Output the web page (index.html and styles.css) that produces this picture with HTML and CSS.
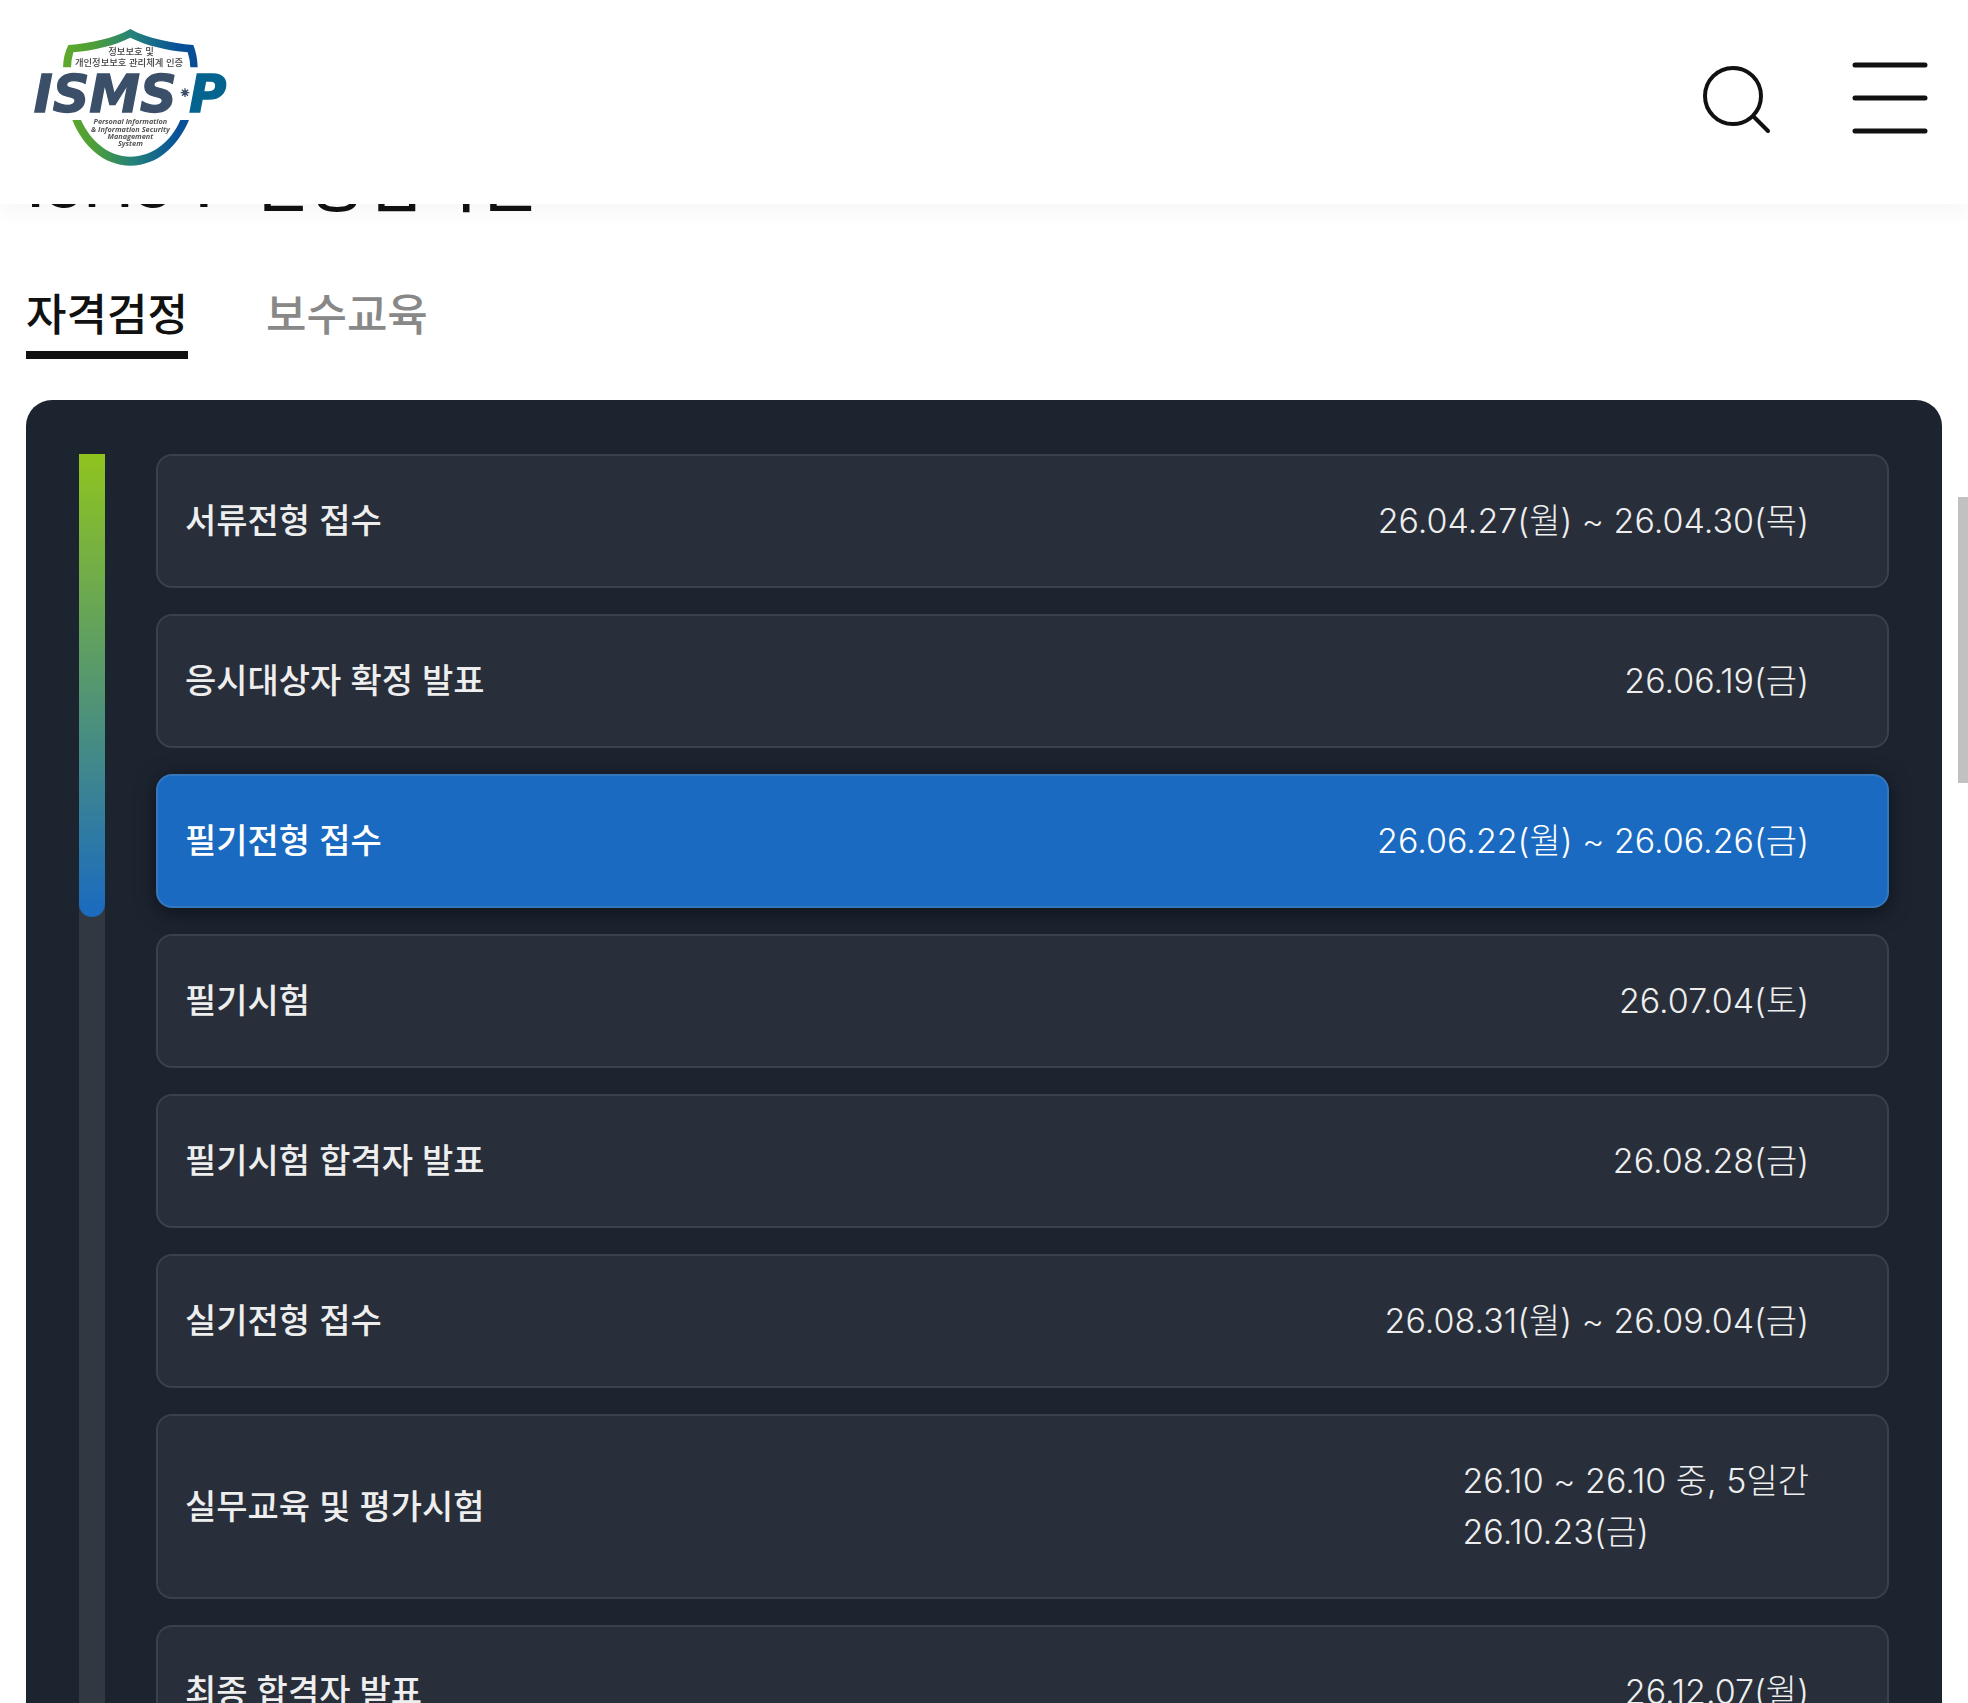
FILE: index.html
```html
<!DOCTYPE html>
<html lang="ko">
<head>
  <meta charset="UTF-8" />
  <meta name="viewport" content="width=device-width, initial-scale=1.0"/>
  <title>ISMS-P 인증심사원</title>
  <link rel="stylesheet" href="styles.css">
</head>
<body>

  <!-- Header -->
  <header class="header">
    <a href="#" class="logo" aria-label="ISMS-P">
      <svg viewBox="99 81 591 426" width="197" height="142">
        <defs>
          <linearGradient id="shield" gradientUnits="userSpaceOnUse" x1="190" y1="0" x2="593" y2="0">
            <stop offset="0" stop-color="#5fa92c"/>
            <stop offset="0.22" stop-color="#4f9f38"/>
            <stop offset="0.52" stop-color="#24817a"/>
            <stop offset="0.85" stop-color="#08529a"/>
            <stop offset="1" stop-color="#084c94"/>
          </linearGradient>
        </defs>
        <path fill="url(#shield)" d="M189 202Q190 165 205 135C275 129 340 116 391 87C442 116 515 129 580 135Q592 165 593 202H571Q570 178 563 157C500 151 440 137 391 113C342 137 282 151 220 157Q214 178 213 202Z"/>
        <path fill="url(#shield)" d="M217 360H243C272 424 326 470 391 470C458 470 514 424 541 360H567C535 436 474 497 391 497C310 497 247 436 217 360Z"/>
        <g class="logo-ko">
          <text x="393" y="166">정보보호 및</text>
          <text x="387" y="198">개인정보보호 관리체계 인증</text>
        </g>
        <g class="logo-mark">
          <text x="101" y="337" fill="#3b4f69" stroke="#3b4f69">ISMS</text>
          <text x="567" y="337" fill="#05638f" stroke="#05638f">P</text>
        </g>
        <path d="M555 265V291M542 278H568M546 269L564 287M564 269L546 287" stroke="#3b4f69" stroke-width="4"/>
        <circle cx="555" cy="278" r="7" fill="#3b4f69"/>
        <g class="logo-en">
          <text x="391" y="373">Personal information</text>
          <text x="391" y="395">&amp; Information Security</text>
          <text x="391" y="417">Management</text>
          <text x="391" y="438">System</text>
        </g>
      </svg>
    </a>
    <div class="header-menu">
      <button type="button" aria-label="검색">
        <svg viewBox="0 0 72 72" width="72" height="72" fill="none" stroke="#111" stroke-width="4" stroke-linecap="round">
          <circle cx="33" cy="34" r="28"/>
          <path d="M54 55L68 69"/>
        </svg>
      </button>
      <button type="button" aria-label="전체 메뉴">
        <svg viewBox="0 0 76 72" width="76" height="72" stroke="#111" stroke-width="5" stroke-linecap="round">
          <path d="M3 3H73M3 36H73M3 69H73"/>
        </svg>
      </button>
    </div>
  </header>

  <!-- Schedule -->
  <main class="content">
    <h1>ISMS-P 인증심사원</h1>

    <nav class="tabs">
      <a href="#" class="on">자격검정</a>
      <a href="#">보수교육</a>
    </nav>

    <section class="schedule">
      <div class="progress"><div class="progress-bar"></div></div>
      <ul class="steps">
        <li><strong>서류전형 접수</strong><span>26.04.27(월) ~ 26.04.30(목)</span></li>
        <li><strong>응시대상자 확정 발표</strong><span>26.06.19(금)</span></li>
        <li class="now"><strong>필기전형 접수</strong><span>26.06.22(월) ~ 26.06.26(금)</span></li>
        <li><strong>필기시험</strong><span>26.07.04(토)</span></li>
        <li><strong>필기시험 합격자 발표</strong><span>26.08.28(금)</span></li>
        <li><strong>실기전형 접수</strong><span>26.08.31(월) ~ 26.09.04(금)</span></li>
        <li><strong>실무교육 및 평가시험</strong><span>26.10 ~ 26.10 중, 5일간<br>26.10.23(금)</span></li>
        <li><strong>최종 합격자 발표</strong><span>26.12.07(월)</span></li>
      </ul>
    </section>
  </main>

  <div class="scroll-thumb"></div>

</body>
</html>
```
FILE: styles.css
```css
* { box-sizing: border-box; margin: 0; padding: 0; }

html { scrollbar-width: none; }

body {
  font-family: Inter, 'Noto Sans CJK KR', sans-serif;
  background: #fff;
  color: #111;
}

a { color: inherit; text-decoration: none; }

/* Header */
.header {
  position: fixed;
  top: 0; left: 0;
  width: 100%;
  display: flex;
  justify-content: space-between;
  align-items: center;
  padding: 27px 40px 35px 33px;
  background: #fff;
  box-shadow: 0 8px 20px rgba(0, 0, 0, 0.04);
  z-index: 10;
}

.logo svg { display: block; }

.logo-mark {
  font: italic bold 153px 'DejaVu Sans', sans-serif;
  stroke-width: 4px;
}

.logo-ko {
  font: 500 28px 'Noto Sans CJK KR', sans-serif;
  fill: #444;
  text-anchor: middle;
}

.logo-en {
  font: italic 700 22px 'Open Sans', sans-serif;
  fill: #555;
  text-anchor: middle;
}

.header-menu {
  display: flex;
  gap: 80px;
}

.header-menu button {
  border: none;
  background: none;
  cursor: pointer;
}

.header-menu svg { display: block; }

/* Content */
.content { padding: 140px 26px 52px; }

h1 {
  font-family: 'Noto Sans CJK KR', sans-serif;
  font-size: 62px;
  font-weight: 500;
  line-height: 80px;
}

/* Tabs */
.tabs {
  display: flex;
  gap: 78px;
  margin: 65px 0 41px;
}

.tabs a {
  padding-bottom: 6px;
  border-bottom: 8px solid transparent;
  font-size: 44px;
  font-weight: 500;
  line-height: 60px;
  color: #888;
}

.tabs .on {
  border-color: #111;
  color: #111;
}

/* Schedule panel */
.schedule {
  display: flex;
  gap: 51px;
  padding: 54px 53px;
  background: #1c2430;
  border-radius: 26px;
}

.progress {
  width: 26px;
  background: #323842;
}

.progress-bar {
  height: 463px;
  background: linear-gradient(#8fc41e, #1a6ac1);
  border-radius: 0 0 13px 13px;
}

.steps {
  flex: 1;
  display: flex;
  flex-direction: column;
  gap: 26px;
  list-style: none;
}

.steps li {
  display: flex;
  justify-content: space-between;
  align-items: center;
  padding: 39px 78px 40px 27px;
  border: 2px solid #3b414b;
  border-radius: 16px;
  background: #282f3b;
  color: #eee;
  font-size: 34px;
  line-height: 51px;
}

.steps strong { font-weight: 500; }
.steps span { font-weight: 300; }

.steps .now {
  background: #1a6ac1;
  border-color: #3577bd;
  color: #fff;
  box-shadow: 0 4px 20px rgba(0, 0, 0, 0.5);
}

.scroll-thumb {
  position: fixed;
  top: 497px;
  right: 0;
  width: 10px;
  height: 286px;
  background: #c1c1c1;
}
```
